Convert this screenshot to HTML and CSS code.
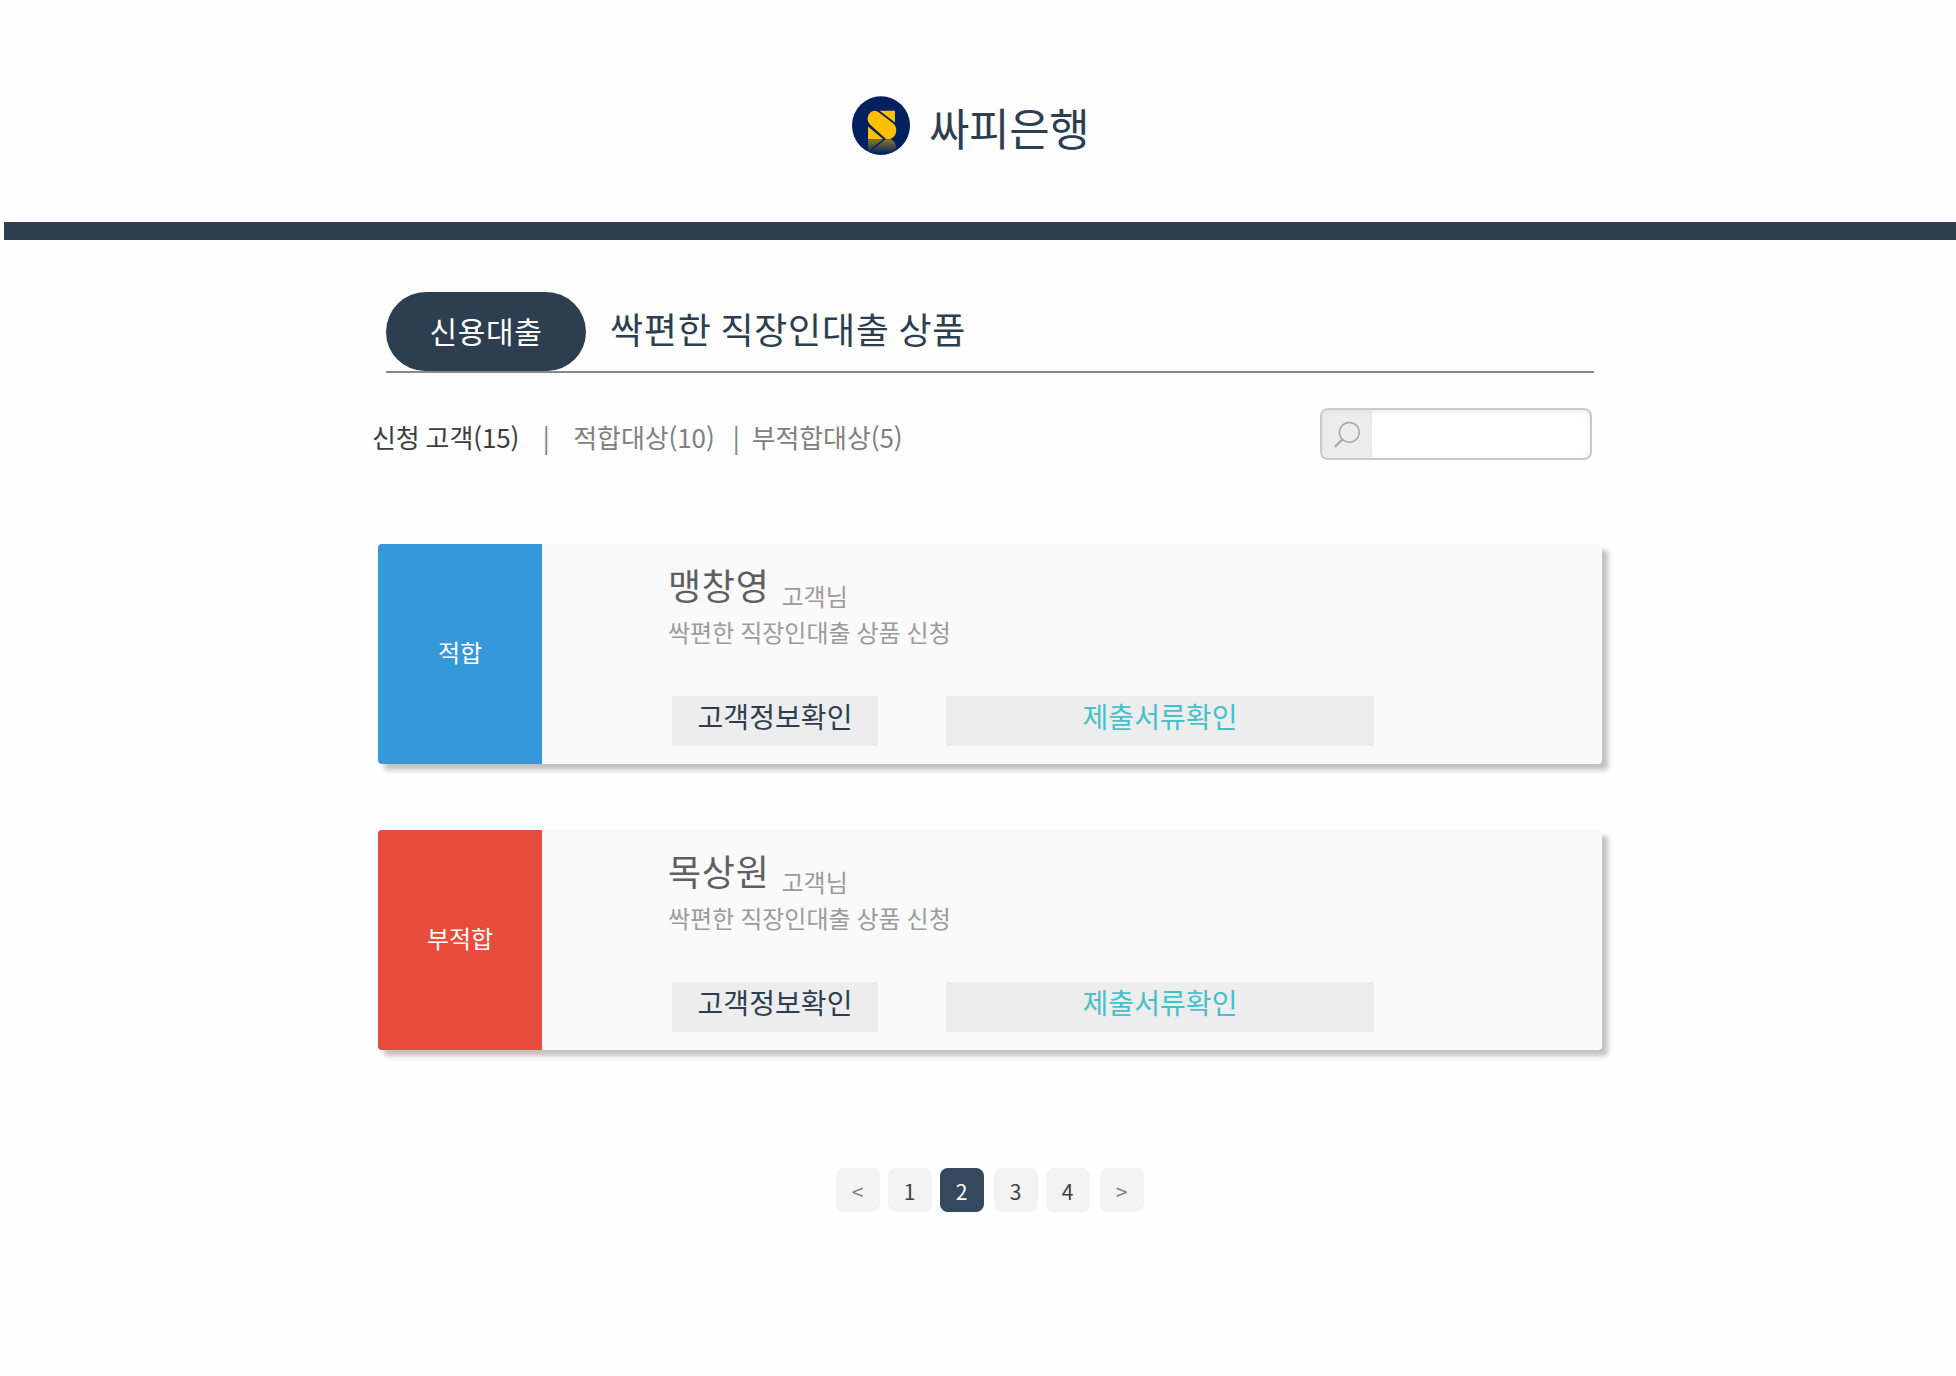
FILE: index.html
```html
<!DOCTYPE html>
<html lang="ko">
<head>
<meta charset="utf-8">
<title>싸피은행</title>
<link rel="stylesheet" href="styles.css">
</head>
<body>
<header class="header">
  <svg class="logo" viewBox="21 24 174 176" aria-hidden="true">
    <defs>
      <linearGradient id="fade" gradientUnits="userSpaceOnUse" x1="0" y1="153" x2="0" y2="196">
        <stop offset="0" stop-color="#8f7a2b"/>
        <stop offset="1" stop-color="#00205f"/>
      </linearGradient>
      <clipPath id="disc"><ellipse cx="108" cy="112" rx="87" ry="88"/></clipPath>
    </defs>
    <ellipse cx="108" cy="112" rx="87" ry="88" fill="#00205f"/>
    <g fill="#ffc000">
      <path d="M104 68H150V103Z"/>
      <path d="M89 68Q96 68 102 73L146 107C158 119 156 143 140 150Q136 152.500 130 152.500H123L75 109C65 98 66 82 76 73Q82 68 89 68Z"/>
      <path d="M69 115L114 152.500H69Z"/>
    </g>
    <g fill="url(#fade)" clip-path="url(#disc)">
      <path d="M69 153H115L69 190Z"/>
      <path d="M122 153H138C153 160 157 178 149 192L138 202H72V194Z"/>
    </g>
  </svg>
  <h1 class="brand">싸피은행</h1>
</header>
<div class="divider"></div>
<main class="content">
  <div class="product">
    <span class="pill">신용대출</span>
    <h2 class="product-name">싹편한 직장인대출 상품</h2>
  </div>
  <div class="toolbar">
    <nav class="tabs">
      <span class="tab active">신청 고객(15)</span>
      <span class="bar">|</span>
      <span class="tab">적합대상(10)</span>
      <span class="bar second">|</span>
      <span class="tab">부적합대상(5)</span>
    </nav>
    <div class="search">
      <span class="search-icon">
        <svg width="50" height="48" viewBox="0 0 50 48" fill="none" stroke="#a6a6a6">
          <circle cx="27.300" cy="22.300" r="9.900" stroke-width="1.500"/>
          <path d="M20.300 29.500L13 36.800" stroke-width="2.200"/>
        </svg>
      </span>
    </div>
  </div>
  <section class="card">
    <div class="status fit">적합</div>
    <div class="detail">
      <div class="who"><span class="name">맹창영</span><span class="suffix">고객님</span></div>
      <div class="request">싹편한 직장인대출 상품 신청</div>
      <div class="actions"><span class="btn info">고객정보확인</span><span class="btn docs">제출서류확인</span></div>
    </div>
  </section>
  <section class="card">
    <div class="status unfit">부적합</div>
    <div class="detail">
      <div class="who"><span class="name">목상원</span><span class="suffix">고객님</span></div>
      <div class="request">싹편한 직장인대출 상품 신청</div>
      <div class="actions"><span class="btn info">고객정보확인</span><span class="btn docs">제출서류확인</span></div>
    </div>
  </section>
  <nav class="pages">
    <span class="page arrow">&lt;</span>
    <span class="page">1</span>
    <span class="page current">2</span>
    <span class="page wide">3</span>
    <span class="page">4</span>
    <span class="page arrow wide">&gt;</span>
  </nav>
</main>
</body>
</html>
```
FILE: styles.css
```css
* { box-sizing: border-box; }
body {
  margin: 0;
  background: #fefefe;
  color: #2c3e50;
  font-family: "Noto Sans CJK KR", sans-serif;
  white-space: nowrap;
}
h1, h2 { margin: 0; font-weight: 400; }
.header { display: flex; height: 222px; padding: 96px 0 0 852px; }
.logo { width: 58px; height: 59px; flex: none; }
.brand { margin: 1px 0 0 19px; font-size: 44px; letter-spacing: -.4px; line-height: 60px; }
.divider { height: 18px; margin-left: 4px; background: #2c3e50; }
.content { width: 1224px; margin-left: 378px; padding-top: 52px; }
.product {
  display: flex;
  width: 1208px;
  height: 81px;
  margin-left: 8px;
  border-bottom: 2px solid #888;
}
.pill {
  width: 200px;
  height: 79px;
  border-radius: 40px 40px 39px 39px;
  background: #2c3e50;
  color: #fff;
  font-size: 30px;
  letter-spacing: .02em;
  line-height: 76px;
  text-align: center;
}
.product-name {
  margin-left: 24px;
  font-size: 36px;
  letter-spacing: .02em;
  line-height: 73px;
  word-spacing: -1.9px;
}
.toolbar {
  display: flex;
  justify-content: space-between;
  height: 171px;
  padding: 35px 10px 0 0;
}
.tabs {
  display: flex;
  margin: 9px 0 0 -6px;
  color: #808080;
  font-size: 26px;
  letter-spacing: -.1px;
  line-height: 40px;
  word-spacing: -1.2px;
}
.active { color: #3d3d3d; }
.bar { width: 54px; text-align: center; }
.second { width: 37px; padding-left: 6px; }
.search {
  width: 272px;
  height: 52px;
  overflow: hidden;
  border: 2px solid #c9c9c9;
  border-radius: 8px;
  background: #fff;
  box-shadow: inset 0 2px 6px rgba(0, 0, 0, .08);
}
.search-icon {
  display: block;
  width: 50px;
  height: 48px;
  background: #ececec;
  box-shadow: inset 0 2px 5px rgba(0, 0, 0, .04);
}
.card {
  display: flex;
  height: 220px;
  margin-bottom: 66px;
  border-radius: 4px;
  background: #fafafa;
  box-shadow: 6px 6px 5px rgba(0, 0, 0, .24);
}
.status {
  width: 164px;
  border-radius: 4px 0 0 4px;
  color: #fff;
  font-size: 24px;
  line-height: 215px;
  text-align: center;
}
.fit { background: #3498db; }
.unfit { background: #e74c3c; }
.detail { padding: 14px 0 0 126px; }
.who { display: flex; height: 54px; }
.name { color: #5f5f5f; font-size: 36px; letter-spacing: .02em; line-height: 52px; }
.suffix { margin-left: 12px; color: #9b9b9b; font-size: 24px; line-height: 75px; }
.request { color: #9b9b9b; font-size: 24px; line-height: 40px; word-spacing: -.8px; }
.actions { display: flex; gap: 68px; margin: 44px 0 0 4px; }
.btn {
  height: 50px;
  background: #ededed;
  font-size: 28px;
  letter-spacing: .1px;
  line-height: 40px;
  text-align: center;
}
.info { width: 206px; }
.docs { width: 428px; color: #48bfcc; }
.pages { display: flex; gap: 8px; margin: 118px 0 0 458px; }
.page {
  width: 44px;
  height: 44px;
  padding-right: 1px;
  border-radius: 8px;
  background: #f3f3f3;
  color: #404040;
  font-size: 21px;
  line-height: 47px;
  text-align: center;
}
.wide { margin-left: 2px; }
.arrow { color: #808080; }
.current { background: #34495e; color: #fff; }
```
